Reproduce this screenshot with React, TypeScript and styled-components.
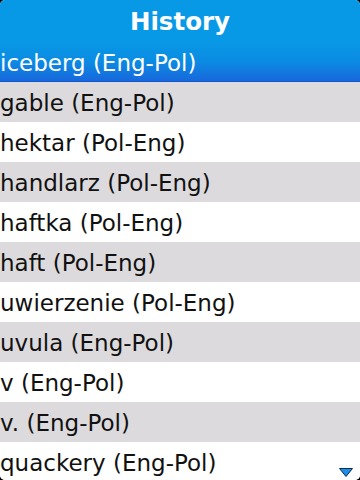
import React from "react";
import styled, { createGlobalStyle } from "styled-components";

const GlobalStyle = createGlobalStyle`
  html, body {
    margin: 0;
    padding: 0;
    background: #000;
  }
  body {
    font-family: "DejaVu Sans", "Liberation Sans", sans-serif;
  }
`;

const Screen = styled.div`
  width: 360px;
  height: 480px;
  overflow: hidden;
  position: relative;
  background: #fff;
  border-radius: 5px;
  display: flex;
  flex-direction: column;
`;

const Header = styled.div`
  height: 42px;
  flex-shrink: 0;
  box-sizing: border-box;
  padding-top: 1px;
  background: #0899e6;
  color: #fff;
  font-size: 24.5px;
  font-weight: bold;
  text-align: center;
  line-height: 41px;
`;

const List = styled.div`
  display: flex;
  flex-direction: column;
`;

const Row = styled.div<{ $selected?: boolean; $shade?: boolean }>`
  height: 40px;
  flex-shrink: 0;
  box-sizing: border-box;
  padding: 3px 0 0 0;
  font-size: 23px;
  line-height: 37px;
  white-space: nowrap;
  color: ${(p) => (p.$selected ? "#fff" : "#111")};
  background: ${(p) =>
    p.$selected
      ? "linear-gradient(to bottom, #0898e5 0%, #0b8be3 50%, #1868dc 100%)"
      : p.$shade
      ? "#dcdadc"
      : "#fff"};
  border-bottom: ${(p) => (p.$selected ? "1px solid #1256cf" : "none")};
`;

const ScrollArrow = styled.svg`
  position: absolute;
  right: 7px;
  bottom: 3px;
`;

const items = [
  "iceberg (Eng-Pol)",
  "gable (Eng-Pol)",
  "hektar (Pol-Eng)",
  "handlarz (Pol-Eng)",
  "haftka (Pol-Eng)",
  "haft (Pol-Eng)",
  "uwierzenie (Pol-Eng)",
  "uvula (Eng-Pol)",
  "v (Eng-Pol)",
  "v. (Eng-Pol)",
  "quackery (Eng-Pol)",
];

function App() {
  return (
    <>
      <GlobalStyle />
      <Screen>
        <Header>History</Header>
        <List>
          {items.map((text, i) => (
            <Row key={text} $selected={i === 0} $shade={i % 2 === 1}>
              {text}
            </Row>
          ))}
        </List>
        <ScrollArrow width="14" height="9" viewBox="0 0 14 9">
          <path d="M0.5 0.5 H13.5 L7 8.5 Z" fill="#1b8ee8" stroke="#0a2a55" strokeWidth="1" />
        </ScrollArrow>
      </Screen>
    </>
  );
}

export default App;
